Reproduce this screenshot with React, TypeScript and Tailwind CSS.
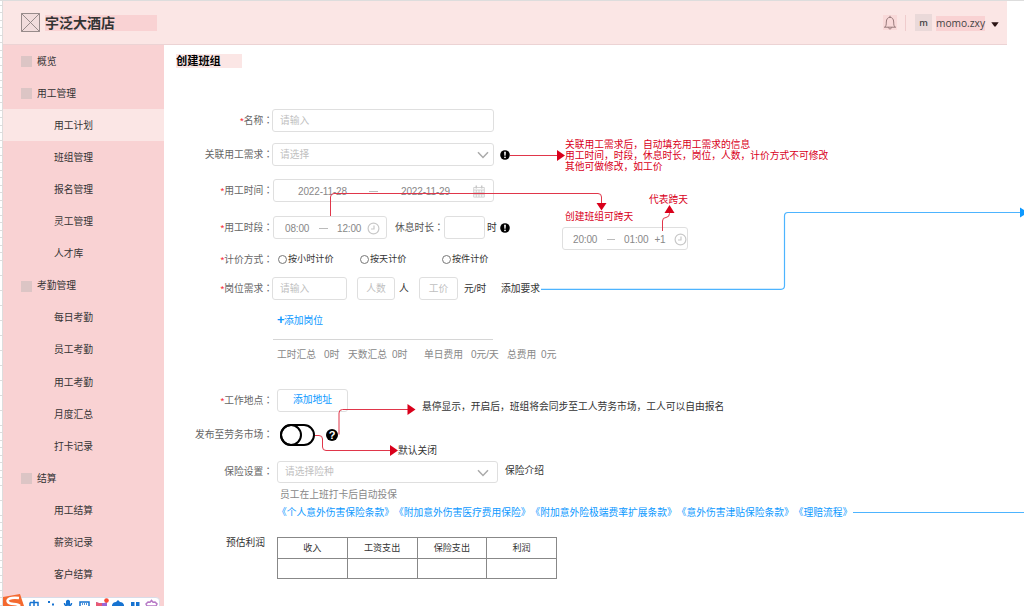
import type { ReactNode } from 'react';
import { clsx } from 'clsx';

const menu = [
  { title: '概览', children: [] },
  { title: '用工管理', children: ['用工计划', '班组管理', '报名管理', '灵工管理', '人才库'] },
  { title: '考勤管理', children: ['每日考勤', '员工考勤', '用工考勤', '月度汇总', '打卡记录'] },
  { title: '结算', children: ['用工结算', '薪资记录', '客户结算'] },
];

const links = [
  '《个人意外伤害保险条款》',
  '《附加意外伤害医疗费用保险》',
  '《附加意外险极端费率扩展条款》',
  '《意外伤害津贴保险条款》',
  '《理赔流程》',
];

function Label({ children, required }: { children: ReactNode; required?: boolean }) {
  return (
    <div className="w-[108px] shrink-0 pt-px text-right text-[#666]">
      {required && <span className="text-[#f5222d]">*</span>}
      {children}
      <span className="-mr-px inline-block font-['Noto_Sans_CJK_TC',sans-serif] leading-none">：</span>
    </div>
  );
}

interface FieldProps {
  children?: ReactNode;
  className?: string;
  filled?: boolean;
}

function Field({ children, className, filled }: FieldProps) {
  return (
    <div
      className={clsx(
        'flex h-full shrink-0 items-center rounded-[3px] border border-[#dfdfdf] bg-white pt-px',
        filled ? 'text-[10px] tracking-[-0.15px] text-[#888]' : 'text-[#bfbfbf]',
        className,
      )}
    >
      {children}
    </div>
  );
}

function Chevron() {
  return (
    <svg width="12" height="8" viewBox="0 0 12 8" fill="none" stroke="#aaa" strokeWidth="1.5">
      <path d="M1 1.2 6 6.4 11 1.2" />
    </svg>
  );
}

function Clock() {
  return (
    <svg width="13" height="13" viewBox="0 0 13 13" fill="none" stroke="#c8c8c8" strokeWidth="1.2">
      <circle cx="6.5" cy="6.5" r="5.4" />
      <path d="M7 3.5V7H4" />
    </svg>
  );
}

function Calendar() {
  return (
    <svg width="12" height="13" viewBox="0 0 12 13" fill="none" stroke="#c8c8c8" strokeWidth="0.8">
      <path d="M.7 2.5h10.6v9.6H.7zM.7 5h10.6M.7 7.4h10.6M.7 9.7h10.6M3.3 5v7M6 5v7M8.7 5v7" />
      <path d="M3.3.5v3M8.7.5v3" strokeWidth="1.5" />
    </svg>
  );
}

function Info() {
  return (
    <svg width="10" height="10" viewBox="0 0 10 10">
      <circle cx="5" cy="5" r="4.8" />
      <path d="M4.1 1.7h1.8l-.3 4H4.4z" fill="#fff" />
      <circle cx="5" cy="7.3" r=".9" fill="#fff" />
    </svg>
  );
}

function Header() {
  return (
    <header className="flex h-11 w-[1004px] items-center border-b border-[#ecd3d4] bg-[#fbe6e5] pl-[18px] pr-2">
      <svg width="19" height="19" viewBox="0 0 19 19" fill="#f1dcdc" stroke="#8c8181" strokeWidth="0.9">
        <path d="M.5.5h18v18H.5zM.5.5l18 18M18.5.5l-18 18" />
      </svg>
      <div className="ml-[5px] h-4 w-28 bg-[#f9d2d3] text-[14px] font-bold leading-4 text-[#333]">宇泛大酒店</div>
      <div className="ml-auto flex items-center">
        <svg width="14" height="15" viewBox="0 0 14 15" fill="none" stroke="#8d6f70" strokeWidth="0.9" className="bg-[#f9d9d9]">
          <path d="M1 12.2h12M2 12c1-1 1.3-2 1.3-5C3.3 4 5 2.3 7 2.3S10.7 4 10.7 7c0 3 .3 4 1.3 5M7 2.3V.8M5.3 12.4c.3 2 3.1 2 3.4 0" />
        </svg>
        <div className="ml-2 h-4 w-px bg-[#efcccd]" />
        <div className="ml-[9px] flex size-[17px] items-center justify-center bg-[#ead9d9] font-['Open_Sans',sans-serif] text-[9px] font-semibold text-[#444]">m</div>
        <div className="ml-1 mt-[2px] w-[49px] whitespace-nowrap bg-[#f9d2d3] font-['Open_Sans',sans-serif] text-[10.2px] leading-[15px] text-[#444]">
          momo.zxy
        </div>
        <svg width="8" height="5" viewBox="0 0 8 5" className="ml-[6px] mt-1" fill="#2b1515">
          <path d="M.3.3h7.4L4.8 4.3q-.8.7-1.6 0z" />
        </svg>
      </div>
    </header>
  );
}

function Sidebar() {
  return (
    <nav className="h-full w-[161px] shrink-0 bg-[#f9d2d3] text-[#333]">
      {menu.map((group) => (
        <div key={group.title}>
          <div className="flex h-[32.08px] items-center pl-[18px] pt-px">
            <span className="mr-[5px] size-[11px] bg-[#dcc5c5]" />
            <span className="pt-px">{group.title}</span>
          </div>
          {group.children.map((item) => (
            <div
              key={item}
              className={clsx('flex h-[32.08px] items-center pl-[51px] pt-[2px]', item === '用工计划' && 'bg-[#fbe6e5]')}
            >
              {item}
            </div>
          ))}
        </div>
      ))}
    </nav>
  );
}

function TeamForm() {
  return (
    <main className="flex w-[860px] shrink-0 flex-col pt-[9px] text-[#333]">
      <h1 className="ml-3 h-[14px] w-[66px] bg-[#fbe6e5] text-[11.2px] font-bold leading-[14px] text-black">创建班组</h1>

      <div className="mt-[41px] flex h-[23px] items-center">
        <Label required>名称</Label>
        <Field className="w-[222px] pl-[7px]">请输入</Field>
      </div>

      <div className="mt-[11px] flex h-[23px] items-center">
        <Label>关联用工需求</Label>
        <Field className="w-[222px] justify-between pl-[7px] pr-1">
          请选择
          <Chevron />
        </Field>
        <div className="ml-[6px]"><Info /></div>
      </div>

      <div className="mt-[13px] flex h-[23px] items-center">
        <Label required>用工时间</Label>
        <Field filled className="ml-px w-[221px] pl-6">
          <span className="w-[71px]">2022-11-28</span>
          <span className="h-px w-[9px] bg-[#bbb]" />
          <span className="ml-[23px] w-[72px]">2022-11-29</span>
          <Calendar />
        </Field>
      </div>

      <div className="mt-[14px] flex h-[23px] items-center">
        <Label required>用工时段</Label>
        <Field filled className="ml-px w-[114px] pl-[11px]">
          <span className="w-[34px]">08:00</span>
          <span className="h-px w-[9px] bg-[#bbb]" />
          <span className="ml-[9px] w-[30px]">12:00</span>
          <Clock />
        </Field>
        <span className="ml-2 w-[49px] whitespace-nowrap pt-px text-[#555]">
          休息时长<span className="inline-block font-['Noto_Sans_CJK_TC',sans-serif] leading-none">：</span>
        </span>
        <Field className="w-[41px]" />
        <span className="ml-[2px] w-[13px] pt-px">时</span>
        <Info />
      </div>

      <div className="mt-3 flex h-[17px] items-center">
        <Label required>计价方式</Label>
        <div className="ml-[6px] flex text-[9.1px]">
          {['按小时计价', '按天计价', '按件计价'].map((name) => (
            <label key={name} className="flex w-[82px] items-center">
              <span className="mr-px size-[9px] rounded-full border border-[#777]" />
              <span className="pt-px">{name}</span>
            </label>
          ))}
        </div>
      </div>

      <div className="mt-[9px] flex h-[23px] items-center">
        <Label required>岗位需求</Label>
        <Field className="w-[75px] pl-[7px]">请输入</Field>
        <Field className="ml-[10px] w-[38px] justify-center">人数</Field>
        <span className="ml-1 w-5 pt-px">人</span>
        <Field className="w-[39px] justify-center">工价</Field>
        <span className="ml-[6px] w-[37px] pt-px">元/时</span>
        <span className="pt-px">添加要求</span>
      </div>

      <button className="ml-[113px] mt-3 flex h-[17px] items-center text-[#0d99ff]">
        <span className="-mt-px w-[7px] text-[13px] font-bold leading-3">+</span>
        <span className="pt-[2px]">添加岗位</span>
      </button>
      <div className="ml-[109px] mt-[10px] h-px w-[220px] bg-[#d6d6d6]" />

      <div className="ml-[113px] mt-[7px] flex h-[17px] items-baseline whitespace-nowrap text-[#888]">
        <span className="w-[47px]">工时汇总</span>
        <span className="w-6 text-[10px]">0时</span>
        <span className="w-[44px]">天数汇总</span>
        <span className="w-8 text-[10px]">0时</span>
        <span className="w-[47px]">单日费用</span>
        <span className="w-9 text-[10px] tracking-[-0.2px]">0元/天</span>
        <span className="w-[34px]">总费用</span>
        <span className="text-[10px]">0元</span>
      </div>

      <div className="mt-[25px] flex h-[23px] items-center">
        <Label required>工作地点</Label>
        <button className="ml-[5px] h-full w-[71px] rounded-[3px] border border-[#dfdfdf] text-[#0d99ff]">添加地址</button>
      </div>

      <div className="mt-3 flex h-[21px] items-center">
        <Label>发布至劳务市场</Label>
        <svg width="36" height="22" viewBox="0 0 36 22" fill="none" stroke="#000" strokeWidth="2" className="ml-2">
          <rect x="1" y="1" width="33" height="20" rx="10" />
          <circle cx="11" cy="11" r="10" />
        </svg>
        <div className="ml-[10px] flex size-3 items-center justify-center rounded-full bg-black text-[11px] font-bold leading-3 text-white">?</div>
      </div>

      <div className="mt-4 flex h-[22px] items-center">
        <Label>保险设置</Label>
        <Field className="ml-[5px] w-[221px] justify-between pl-[7px] pr-2">
          请选择险种
          <Chevron />
        </Field>
        <span className="-mt-px ml-[7px]">保险介绍</span>
      </div>
      <p className="ml-[116px] mt-1 h-4 leading-4 text-[#888]">员工在上班打卡后自动投保</p>
      <div className="ml-[113px] mt-[2px] flex h-4 whitespace-nowrap leading-4 text-[#0d99ff]">
        {links.map((link) => (
          <a key={link}>{link}</a>
        ))}
      </div>

      <div className="mt-4 flex">
        <div className="w-[113px] pl-[62px] leading-3">预估利润</div>
        <div className="grid h-[42px] w-[280px] grid-cols-4 grid-rows-2 border-l border-t border-[#888] text-[9.1px]">
          {['收入', '工资支出', '保险支出', '利润', '', '', '', ''].map((cell, i) => (
            <div key={i} className="flex items-center justify-center border-b border-r border-[#888] pt-[2px]">{cell}</div>
          ))}
        </div>
      </div>
    </main>
  );
}

// Review notes and the connectors that tie them to the form
function Annotations() {
  return (
    <>
      <svg width="1024" height="606" viewBox="0 0 1024 606" fill="none" className="pointer-events-none absolute inset-0">
        <g stroke="#e0364a">
          <path d="M510 155.5H558" />
          <path d="M330.5 216V197q0-3.5 3.5-3.5H598q3.5 0 3.5 3.5V204" />
          <path d="M662.5 231V221q0-3.5 3.5-3.5 3.5-.5 3.5-4V212" />
          <path d="M339 434.5V413q0-3.5 3.5-3.5H408" />
          <path d="M315 435.5H319q3.5 0 3.5 3.5V447q0 3.5 3.5 3.5H391" />
        </g>
        <g fill="#d9001b">
          <path d="M557 150v11l8-5.5z" />
          <path d="M596.5 203h10l-5 7.5z" />
          <path d="M664.5 213h10l-5-8z" />
          <path d="M407.5 404v11l8-5.5z" />
          <path d="M390 445v11l8-5.5z" />
        </g>
        <g stroke="#4db4ff" strokeWidth="1.2">
          <path d="M541 289.3H781q3.5 0 3.5-3.5V216q0-3.5 3.5-3.5H1021" />
          <path d="M853 512.5H1024" />
        </g>
        <path d="M1020 207.5v10l8-5z" fill="#0d99ff" />
      </svg>
      <p className="absolute left-[565px] top-[138.5px] whitespace-pre leading-[11.2px] text-[#d9001b]">
        {'关联用工需求后，自动填充用工需求的信息\n用工时间，时段，休息时长，岗位，人数，计价方式不可修改\n其他可做修改，如工价'}
      </p>
      <p className="absolute left-[565px] top-[211px] leading-3 text-[#d9001b]">创建班组可跨天</p>
      <p className="absolute left-[649px] top-[194px] leading-3 text-[#d9001b]">代表跨天</p>
      <div className="absolute left-[562px] top-[227px] -z-10 h-[23px]">
        <Field filled className="w-[126px] pl-[10px]">
          <span className="w-[35px]">20:00</span>
          <span className="h-px w-[8px] bg-[#bbb]" />
          <span className="ml-[9px] w-[31px]">01:00</span>
          <span className="w-5">+1</span>
          <span className="shrink-0"><Clock /></span>
        </Field>
      </div>
      <p className="absolute left-[422px] top-[401px] leading-3 text-[#333]">
        悬停显示，开启后，班组将会同步至工人劳务市场，工人可以自由报名
      </p>
      <p className="absolute left-[398px] top-[445px] leading-3 text-[#333]">默认关闭</p>
    </>
  );
}

// Input method bar docked at the bottom edge
function ImeBar() {
  return (
    <div className="absolute left-[3px] top-[594px] h-3 w-[157px] overflow-hidden">
      <div className="mt-[3px] h-3 rounded-tr-sm border border-[#d9dce8] bg-white" />
      <svg width="157" height="12" viewBox="0 0 157 12" fill="none" className="absolute inset-0">
        <path d="M0 3 17 0l4 12H0z" fill="#f4692f" />
        <path d="M16 4C8 3 3 5 5 8s9 1 12 4" stroke="#fff" strokeWidth="2.5" />
        <g stroke="#1673d1" strokeWidth="1.5">
          <path d="M27 8.5h8V12M27 12V8.5M31 6v6" />
          <path d="M45 8h2M49 10.5h2" strokeWidth="2" />
          <path d="M61.5 9q0 3 3.5 3t3.5-3" />
          <path d="M77 8h9v6h-9zM79 10h1M81 10h1M83 10h1" />
        </g>
        <path d="M63 7q2-2.5 4 0v4h-4zM109 11q1-3 4-3l2-2 2 2q3 0 4 3v1h-12zM128 8h3.5v4H128zM133 8h3.5v4H133z" fill="#1673d1" />
        <path d="M93 8l3 1h5l3-1v4H93z" fill="#9b66d5" />
        <path d="M93 8l3 1h3v3h-6z" fill="#e95a75" />
        <circle cx="103.500" cy="6.5" r="2.3" fill="#fb4b35" />
        <path d="m143 10 2-2 2 .3 1.5-1.800L150 8.3l2-.3 2 2-1 2h-9z" stroke="#b678c6" strokeWidth="1.5" />
      </svg>
    </div>
  );
}

export default function App() {
  return (
    <div className="relative isolate h-[606px] w-[1024px] overflow-hidden bg-white font-['Liberation_Sans','Noto_Sans_CJK_SC',sans-serif] text-[9.75px]">
      <div className="h-px bg-[#ddd]" />
      <div className="flex h-[605px]">
        <div className="w-[3px] shrink-0 border-r border-[#ddd] bg-[repeating-linear-gradient(to_bottom,#fff_0px,#fff_4px,#ddd_4px,#ddd_5px,#fff_5px,#fff_7.5px)]" />
        <div className="flex flex-col">
          <Header />
          <div className="flex h-[561px]">
            <Sidebar />
            <TeamForm />
          </div>
        </div>
      </div>
      <Annotations />
      <ImeBar />
    </div>
  );
}
